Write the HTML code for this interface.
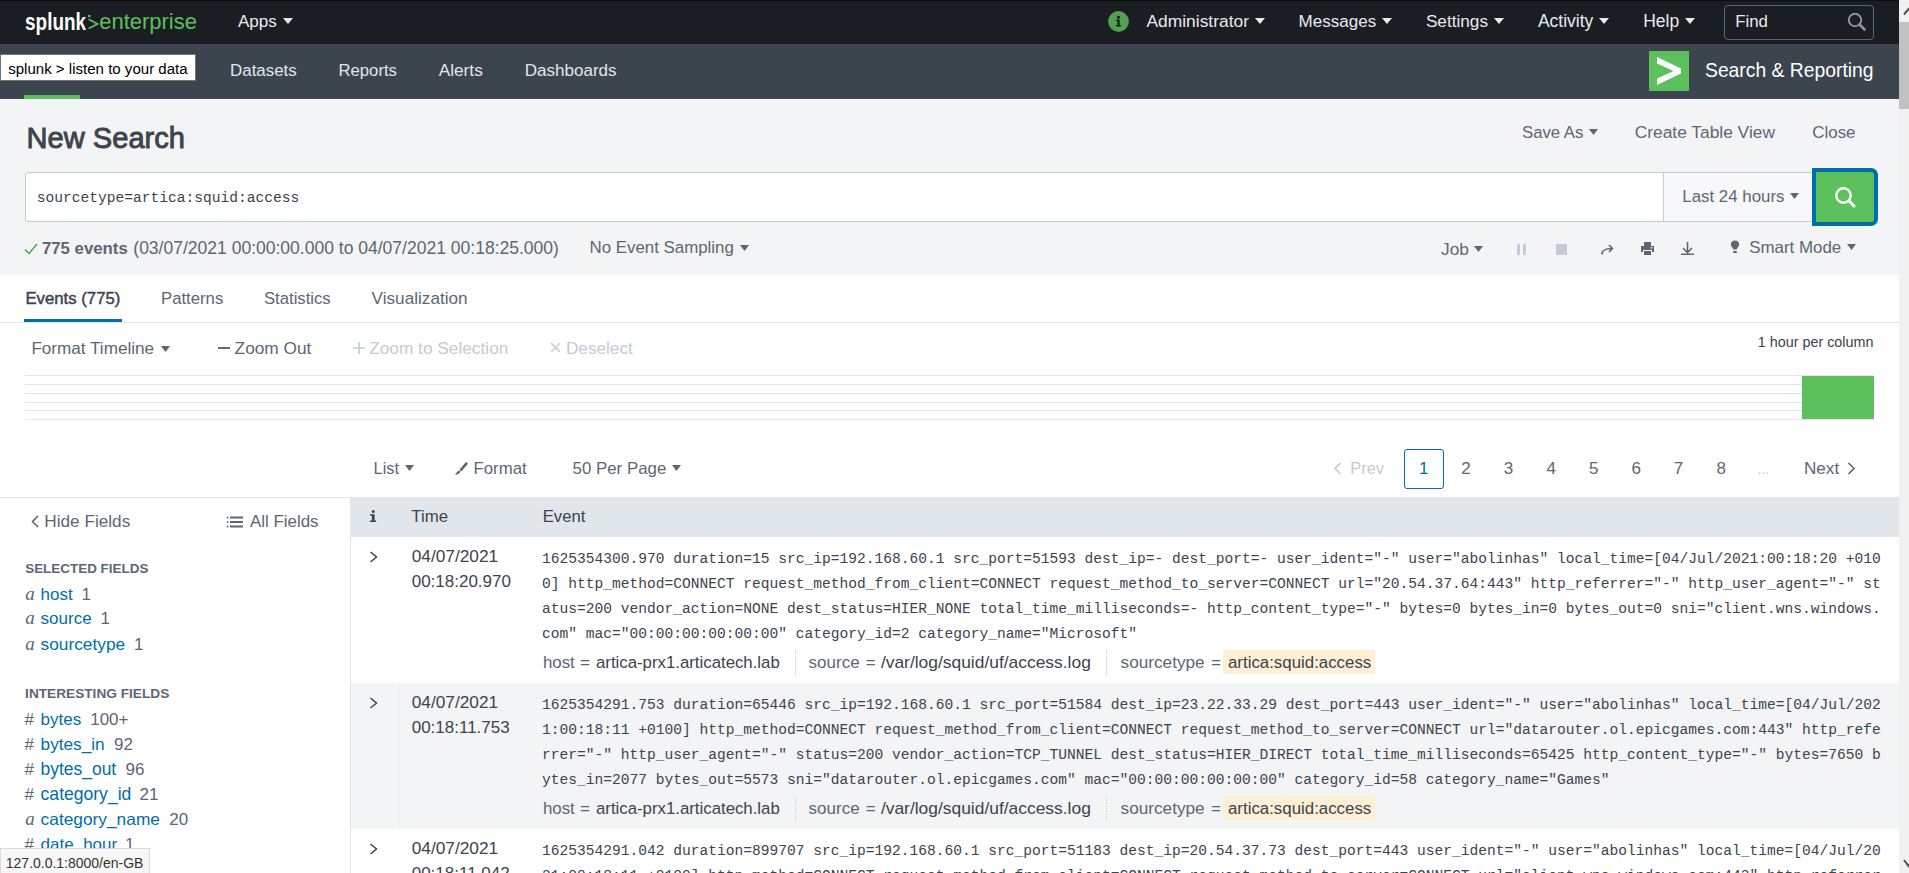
<!DOCTYPE html>
<html><head><meta charset="utf-8"><style>
html,body{margin:0;padding:0;width:1909px;height:873px;overflow:hidden;background:#fff}
body{position:relative;font-family:"Liberation Sans",sans-serif}
.t{position:absolute;white-space:pre;line-height:1;}
.r{position:absolute;display:block}
</style></head><body>
<div class="r" style="left:0px;top:0px;width:1909px;height:44px;background:#1a1d21;"></div>
<div class="r" style="left:0px;top:0px;width:1899px;height:1px;background:#0b0c0d;"></div>
<div class="r" style="left:0px;top:43px;width:1899px;height:1px;background:#16191c;"></div>
<div class="r" style="left:0px;top:44px;width:1899px;height:55px;background:#3c444d;"></div>
<div class="r" style="left:0px;top:99px;width:1899px;height:176px;background:#f2f4f5;"></div>
<div class="r" style="left:0px;top:275px;width:1899px;height:598px;background:#ffffff;"></div>
<div class="t" style="left:25px;top:11px;font-size:23.5px;line-height:23.5px;font-weight:bold;color:#fff;transform-origin:0 0;transform:scaleX(0.807);letter-spacing:0">splunk</div>
<svg class="r" style="left:87px;top:14px" width="13" height="17" viewBox="0 0 13 17"><rect x="1" y="1" width="2.6" height="2.2" fill="#5cc05c"/><path d="M1.6 5.2L10.6 9.9L1.6 14.6" fill="none" stroke="#5cc05c" stroke-width="1.7"/></svg>
<div class="t" style="left:99.20px;top:11.00px;font-size:21.99px;color:#5cc05c;font-family:'Liberation Sans',sans-serif;">enterprise</div>
<div class="t" style="left:237.90px;top:13.00px;font-size:17.07px;color:#e8ebee;font-family:'Liberation Sans',sans-serif;">Apps</div>
<svg class="r" style="left:283px;top:18px" width="10" height="6" viewBox="0 0 10 6"><path d="M0 0H10L5.0 6Z" fill="#e8ebee"/></svg>
<svg class="r" style="left:1108px;top:11px" width="21" height="21" viewBox="0 0 21 21"><circle cx="10.5" cy="10.5" r="10.4" fill="#53a051"/><circle cx="10.5" cy="6.2" r="1.5" fill="#1a1c20"/><path d="M8 8.6H11.6V14H13V15.4H8V14H9.4V10H8Z" fill="#1a1c20"/></svg>
<div class="t" style="left:1146.50px;top:13.00px;font-size:17.40px;color:#e8ebee;font-family:'Liberation Sans',sans-serif;">Administrator</div>
<svg class="r" style="left:1255px;top:18px" width="10" height="6" viewBox="0 0 10 6"><path d="M0 0H10L5.0 6Z" fill="#e8ebee"/></svg>
<div class="t" style="left:1298.60px;top:13.00px;font-size:17.03px;color:#e8ebee;font-family:'Liberation Sans',sans-serif;">Messages</div>
<svg class="r" style="left:1382px;top:18px" width="10" height="6" viewBox="0 0 10 6"><path d="M0 0H10L5.0 6Z" fill="#e8ebee"/></svg>
<div class="t" style="left:1425.90px;top:13.00px;font-size:17.19px;color:#e8ebee;font-family:'Liberation Sans',sans-serif;">Settings</div>
<svg class="r" style="left:1494px;top:18px" width="10" height="6" viewBox="0 0 10 6"><path d="M0 0H10L5.0 6Z" fill="#e8ebee"/></svg>
<div class="t" style="left:1537.90px;top:13.00px;font-size:17.49px;color:#e8ebee;font-family:'Liberation Sans',sans-serif;">Activity</div>
<svg class="r" style="left:1599px;top:18px" width="10" height="6" viewBox="0 0 10 6"><path d="M0 0H10L5.0 6Z" fill="#e8ebee"/></svg>
<div class="t" style="left:1643.20px;top:13.00px;font-size:17.50px;color:#e8ebee;font-family:'Liberation Sans',sans-serif;">Help</div>
<svg class="r" style="left:1685px;top:18px" width="10" height="6" viewBox="0 0 10 6"><path d="M0 0H10L5.0 6Z" fill="#e8ebee"/></svg>
<div class="r" style="left:1724px;top:5px;width:150px;height:35px;border:1px solid #5c6773;border-radius:4px;box-sizing:border-box;"></div>
<div class="t" style="left:1735.20px;top:14.00px;font-size:16.86px;color:#e8ebee;font-family:'Liberation Sans',sans-serif;">Find</div>
<svg class="r" style="left:1846px;top:11px" width="22" height="20" viewBox="0 0 22 20"><circle cx="9" cy="9" r="6.2" fill="none" stroke="#8b959e" stroke-width="2"/><path d="M13.5 13.5L18.5 18.5" stroke="#8b959e" stroke-width="2.6" stroke-linecap="round"/></svg>
<div class="r" style="left:0;top:54px;width:194px;height:25px;background:#fff;border:1px solid #767676;"></div>
<div class="t" style="left:8.20px;top:61.00px;font-size:15.05px;color:#000;font-family:'Liberation Sans',sans-serif;">splunk &gt; listen to your data</div>
<div class="r" style="left:24px;top:95px;width:56px;height:4px;background:#5cc05c;"></div>
<div class="t" style="left:230.00px;top:63.00px;font-size:16.93px;color:#e1e6eb;font-family:'Liberation Sans',sans-serif;">Datasets</div>
<div class="t" style="left:338.50px;top:63.00px;font-size:16.71px;color:#e1e6eb;font-family:'Liberation Sans',sans-serif;">Reports</div>
<div class="t" style="left:438.70px;top:62.00px;font-size:17.25px;color:#e1e6eb;font-family:'Liberation Sans',sans-serif;">Alerts</div>
<div class="t" style="left:524.70px;top:62.00px;font-size:17.06px;color:#e1e6eb;font-family:'Liberation Sans',sans-serif;">Dashboards</div>
<div class="r" style="left:1649px;top:51px;width:40px;height:40px;background:#5cc05c;"></div>
<svg class="r" style="left:1649px;top:51px" width="40" height="40" viewBox="0 0 40 40"><path d="M8 6L32 17.5V22.5L8 34V27.5L24.5 20L8 12.5Z" fill="#fff"/></svg>
<div class="t" style="left:1705.00px;top:61.00px;font-size:19.32px;color:#fff;font-family:'Liberation Sans',sans-serif;">Search &amp; Reporting</div>
<div class="t" style="left:26.60px;top:124.00px;font-size:29.08px;color:#3c444d;font-family:'Liberation Sans',sans-serif;-webkit-text-stroke:0.9px #3c444d;">New Search</div>
<div class="t" style="left:1522.00px;top:125.00px;font-size:16.73px;color:#5c6773;font-family:'Liberation Sans',sans-serif;">Save As</div>
<svg class="r" style="left:1589px;top:129px" width="9" height="6" viewBox="0 0 9 6"><path d="M0 0H9L4.5 6Z" fill="#5c6773"/></svg>
<div class="t" style="left:1634.70px;top:124.00px;font-size:17.36px;color:#5c6773;font-family:'Liberation Sans',sans-serif;">Create Table View</div>
<div class="t" style="left:1812.20px;top:125.00px;font-size:16.97px;color:#5c6773;font-family:'Liberation Sans',sans-serif;">Close</div>
<div class="r" style="left:25px;top:172px;width:1660px;height:50px;background:#fff;border:1px solid #c3cbd4;border-radius:3px;box-sizing:border-box"></div>
<div class="r" style="left:1663px;top:172px;width:152px;height:50px;background:#f7f8fa;border:1px solid #c3cbd4;border-right:0;box-sizing:border-box"></div>
<div class="t" style="left:36.70px;top:191.00px;font-size:14.58px;color:#3c444d;font-family:'Liberation Mono',monospace;">sourcetype=artica:squid:access</div>
<div class="t" style="left:1682.30px;top:189.00px;font-size:16.86px;color:#5c6773;font-family:'Liberation Sans',sans-serif;">Last 24 hours</div>
<svg class="r" style="left:1790px;top:193px" width="9" height="6" viewBox="0 0 9 6"><path d="M0 0H9L4.5 6Z" fill="#5c6773"/></svg>
<div class="r" style="left:1812px;top:168px;width:66px;height:58px;background:#5cc05c;border:4px solid #006eaa;border-radius:0 7px 7px 0;box-sizing:border-box"></div>
<svg class="r" style="left:1832px;top:184px" width="26" height="26" viewBox="0 0 26 26"><circle cx="11.5" cy="11.5" r="7.2" fill="none" stroke="#fff" stroke-width="2.4"/><path d="M16.8 16.8L22 22" stroke="#fff" stroke-width="3" stroke-linecap="round"/></svg>
<svg class="r" style="left:24px;top:243px" width="14" height="12" viewBox="0 0 14 12"><path d="M1 6.5L5 10.5L13 1" fill="none" stroke="#4aa64a" stroke-width="1.4"/></svg>
<div class="t" style="left:41.90px;top:241.00px;font-size:16.79px;color:#5c6773;font-family:'Liberation Sans',sans-serif;font-weight:bold;">775 events</div>
<div class="t" style="left:133.30px;top:240.00px;font-size:17.53px;color:#5c6773;font-family:'Liberation Sans',sans-serif;">(03/07/2021 00:00:00.000 to 04/07/2021 00:18:25.000)</div>
<div class="t" style="left:589.50px;top:240.00px;font-size:16.88px;color:#5c6773;font-family:'Liberation Sans',sans-serif;">No Event Sampling</div>
<svg class="r" style="left:740px;top:245px" width="9" height="6" viewBox="0 0 9 6"><path d="M0 0H9L4.5 6Z" fill="#5c6773"/></svg>
<div class="t" style="left:1441.00px;top:241.00px;font-size:17.31px;color:#5c6773;font-family:'Liberation Sans',sans-serif;">Job</div>
<svg class="r" style="left:1474px;top:246px" width="9" height="6" viewBox="0 0 9 6"><path d="M0 0H9L4.5 6Z" fill="#5c6773"/></svg>
<div class="r" style="left:1517px;top:243.5px;width:3px;height:11px;background:#c3cbd4;"></div>
<div class="r" style="left:1523px;top:243.5px;width:3px;height:11px;background:#c3cbd4;"></div>
<div class="r" style="left:1556px;top:243.5px;width:11px;height:11px;background:#c3cbd4;"></div>
<svg class="r" style="left:1601px;top:244px" width="13" height="11" viewBox="0 0 13 11"><path d="M1 10.5C1 6 4 4.5 11 4.5M8 1L11.5 4.5L8 8" fill="none" stroke="#5c6773" stroke-width="1.6"/></svg>
<svg class="r" style="left:1641px;top:242px" width="13" height="13" viewBox="0 0 13 13"><path d="M3 0H10V4H3Z M0 4H13V10H11V8H2V10H0Z M3 9H10V13H3Z" fill="#5c6773"/><rect x="9.5" y="5.2" width="2" height="1.2" fill="#fff"/></svg>
<svg class="r" style="left:1681px;top:242px" width="13" height="13" viewBox="0 0 13 13"><path d="M6.5 0V10M2 6L6.5 10.5L11 6M0 12.2H13" fill="none" stroke="#5c6773" stroke-width="1.6"/></svg>
<svg class="r" style="left:1730px;top:240px" width="10" height="14" viewBox="0 0 10 14"><path d="M5 0.5C2.5 0.5 0.8 2.3 0.8 4.5C0.8 6.5 2.8 7.5 3.5 9.5H6.5C7.2 7.5 9.2 6.5 9.2 4.5C9.2 2.3 7.5 0.5 5 0.5Z M3.2 11H6.8V13H3.2Z" fill="#5c6773"/></svg>
<div class="t" style="left:1749.20px;top:240.00px;font-size:16.91px;color:#5c6773;font-family:'Liberation Sans',sans-serif;">Smart Mode</div>
<svg class="r" style="left:1847px;top:244px" width="9" height="6" viewBox="0 0 9 6"><path d="M0 0H9L4.5 6Z" fill="#5c6773"/></svg>
<div class="t" style="left:25.40px;top:291.00px;font-size:16.76px;color:#3c444d;font-family:'Liberation Sans',sans-serif;-webkit-text-stroke:0.45px #3c444d;">Events (775)</div>
<div class="t" style="left:161.00px;top:291.00px;font-size:16.73px;color:#5c6773;font-family:'Liberation Sans',sans-serif;">Patterns</div>
<div class="t" style="left:264.00px;top:291.00px;font-size:16.67px;color:#5c6773;font-family:'Liberation Sans',sans-serif;">Statistics</div>
<div class="t" style="left:371.60px;top:290.00px;font-size:17.17px;color:#5c6773;font-family:'Liberation Sans',sans-serif;">Visualization</div>
<div class="r" style="left:0px;top:322px;width:1899px;height:1px;background:#e1e6eb;"></div>
<div class="r" style="left:24px;top:319px;width:98px;height:3px;background:#006eaa;"></div>
<div class="t" style="left:31.40px;top:340.00px;font-size:17.12px;color:#5c6773;font-family:'Liberation Sans',sans-serif;">Format Timeline</div>
<svg class="r" style="left:161px;top:346px" width="9" height="6" viewBox="0 0 9 6"><path d="M0 0H9L4.5 6Z" fill="#5c6773"/></svg>
<div class="r" style="left:218px;top:347px;width:12px;height:2px;background:#5c6773;"></div>
<div class="t" style="left:234.60px;top:340.00px;font-size:17.25px;color:#5c6773;font-family:'Liberation Sans',sans-serif;">Zoom Out</div>
<svg class="r" style="left:353px;top:342px" width="12" height="12" viewBox="0 0 12 12"><path d="M6 0V12M0 6H12" stroke="#c3cbd4" stroke-width="1.6"/></svg>
<div class="t" style="left:369.20px;top:340.00px;font-size:17.27px;color:#c3cbd4;font-family:'Liberation Sans',sans-serif;">Zoom to Selection</div>
<svg class="r" style="left:550px;top:342px" width="11" height="11" viewBox="0 0 11 11"><path d="M1 1L10 10M10 1L1 10" stroke="#c3cbd4" stroke-width="1.5"/></svg>
<div class="t" style="left:565.90px;top:340.00px;font-size:17.22px;color:#c3cbd4;font-family:'Liberation Sans',sans-serif;">Deselect</div>
<div class="t" style="left:1757.80px;top:335.00px;font-size:14.35px;color:#3c444d;font-family:'Liberation Sans',sans-serif;">1 hour per column</div>
<div class="r" style="left:25px;top:375px;width:1849px;height:1px;background:#e4e4e4;"></div>
<div class="r" style="left:25px;top:384px;width:1849px;height:1px;background:#e4e4e4;"></div>
<div class="r" style="left:25px;top:393px;width:1849px;height:1px;background:#e4e4e4;"></div>
<div class="r" style="left:25px;top:402px;width:1849px;height:1px;background:#e4e4e4;"></div>
<div class="r" style="left:25px;top:410px;width:1849px;height:1px;background:#e4e4e4;"></div>
<div class="r" style="left:25px;top:419px;width:1849px;height:1px;background:#e4e4e4;"></div>
<div class="r" style="left:1801.6px;top:376px;width:72.3px;height:43px;background:#5cc05c;"></div>
<div class="t" style="left:373.60px;top:460.00px;font-size:16.32px;color:#5c6773;font-family:'Liberation Sans',sans-serif;">List</div>
<svg class="r" style="left:405px;top:465px" width="9" height="6" viewBox="0 0 9 6"><path d="M0 0H9L4.5 6Z" fill="#5c6773"/></svg>
<svg class="r" style="left:454px;top:462px" width="14" height="14" viewBox="0 0 14 14"><path d="M12.3 1.6L7.2 7.6" stroke="#5c6773" stroke-width="2.6" stroke-linecap="round"/><path d="M5.6 8.6C3.6 8.9 2.6 10.2 1.2 12.8C3.6 12.6 5.4 12 6.6 9.8Z" fill="#5c6773"/></svg>
<div class="t" style="left:473.50px;top:461.00px;font-size:16.80px;color:#5c6773;font-family:'Liberation Sans',sans-serif;">Format</div>
<div class="t" style="left:572.50px;top:461.00px;font-size:16.89px;color:#5c6773;font-family:'Liberation Sans',sans-serif;">50 Per Page</div>
<svg class="r" style="left:672px;top:465px" width="9" height="6" viewBox="0 0 9 6"><path d="M0 0H9L4.5 6Z" fill="#5c6773"/></svg>
<svg class="r" style="left:1333px;top:462px" width="9" height="13" viewBox="0 0 9 13"><path d="M7.5 1L2 6.5L7.5 12" fill="none" stroke="#c3cbd4" stroke-width="1.6"/></svg>
<div class="t" style="left:1350.20px;top:460.00px;font-size:16.44px;color:#c3cbd4;font-family:'Liberation Sans',sans-serif;">Prev</div>
<div class="r" style="left:1404px;top:449px;width:40px;height:40px;border:1.5px solid #006eaa;border-radius:3px;box-sizing:border-box"></div>
<div class="t" style="left:1419.07px;top:460.00px;font-size:17.00px;color:#006eaa;font-family:'Liberation Sans',sans-serif;">1</div>
<div class="t" style="left:1461.27px;top:460.00px;font-size:17.00px;color:#5c6773;font-family:'Liberation Sans',sans-serif;">2</div>
<div class="t" style="left:1503.87px;top:460.00px;font-size:17.00px;color:#5c6773;font-family:'Liberation Sans',sans-serif;">3</div>
<div class="t" style="left:1546.47px;top:460.00px;font-size:17.00px;color:#5c6773;font-family:'Liberation Sans',sans-serif;">4</div>
<div class="t" style="left:1588.97px;top:460.00px;font-size:17.00px;color:#5c6773;font-family:'Liberation Sans',sans-serif;">5</div>
<div class="t" style="left:1631.47px;top:460.00px;font-size:17.00px;color:#5c6773;font-family:'Liberation Sans',sans-serif;">6</div>
<div class="t" style="left:1673.77px;top:460.00px;font-size:17.00px;color:#5c6773;font-family:'Liberation Sans',sans-serif;">7</div>
<div class="t" style="left:1716.57px;top:460.00px;font-size:17.00px;color:#5c6773;font-family:'Liberation Sans',sans-serif;">8</div>
<div class="t" style="left:1757.50px;top:462.00px;font-size:14.00px;color:#c3cbd4;font-family:'Liberation Sans',sans-serif;">...</div>
<div class="t" style="left:1804.00px;top:460.00px;font-size:17.12px;color:#5c6773;font-family:'Liberation Sans',sans-serif;">Next</div>
<svg class="r" style="left:1847px;top:462px" width="9" height="13" viewBox="0 0 9 13"><path d="M1.5 1L7 6.5L1.5 12" fill="none" stroke="#5c6773" stroke-width="1.6"/></svg>
<div class="r" style="left:0px;top:497px;width:351px;height:1px;background:#e1e6eb;"></div>
<div class="r" style="left:350px;top:497px;width:1px;height:376px;background:#e1e6eb;"></div>
<svg class="r" style="left:31px;top:515px" width="8" height="13" viewBox="0 0 8 13"><path d="M7 1L1.5 6.5L7 12" fill="none" stroke="#5c6773" stroke-width="1.6"/></svg>
<div class="t" style="left:44.30px;top:513.00px;font-size:17.19px;color:#5c6773;font-family:'Liberation Sans',sans-serif;">Hide Fields</div>
<svg class="r" style="left:226px;top:516px" width="17" height="12" viewBox="0 0 17 12"><rect x="0.8" y="0.8" width="1.6" height="1.6" fill="#5c6773"/><rect x="0.8" y="5.3" width="1.6" height="1.6" fill="#5c6773"/><rect x="0.8" y="9.8" width="1.6" height="1.6" fill="#5c6773"/><rect x="4" y="0.5" width="13" height="2" fill="#5c6773"/><rect x="4" y="5" width="13" height="2" fill="#5c6773"/><rect x="4" y="9.5" width="13" height="2" fill="#5c6773"/></svg>
<div class="t" style="left:249.90px;top:514.00px;font-size:16.93px;color:#5c6773;font-family:'Liberation Sans',sans-serif;">All Fields</div>
<div class="t" style="left:25.20px;top:562.00px;font-size:13.45px;color:#5c6773;font-family:'Liberation Sans',sans-serif;font-weight:bold;">SELECTED FIELDS</div>
<div class="t" style="left:25.20px;top:584.00px;font-size:19.00px;color:#5c6773;font-family:'Liberation Serif',serif;font-style:italic;">a</div>
<div class="t" style="left:40.60px;top:587.00px;font-size:16.93px;color:#006eaa;font-family:'Liberation Sans',sans-serif;">host</div>
<div class="t" style="left:81.40px;top:586.00px;font-size:17.00px;color:#5c6773;font-family:'Liberation Sans',sans-serif;">1</div>
<div class="t" style="left:25.20px;top:608.00px;font-size:19.00px;color:#5c6773;font-family:'Liberation Serif',serif;font-style:italic;">a</div>
<div class="t" style="left:40.60px;top:610.00px;font-size:17.06px;color:#006eaa;font-family:'Liberation Sans',sans-serif;">source</div>
<div class="t" style="left:100.60px;top:610.00px;font-size:17.00px;color:#5c6773;font-family:'Liberation Sans',sans-serif;">1</div>
<div class="t" style="left:25.20px;top:634.00px;font-size:19.00px;color:#5c6773;font-family:'Liberation Serif',serif;font-style:italic;">a</div>
<div class="t" style="left:40.60px;top:636.00px;font-size:17.29px;color:#006eaa;font-family:'Liberation Sans',sans-serif;">sourcetype</div>
<div class="t" style="left:134.00px;top:636.00px;font-size:17.00px;color:#5c6773;font-family:'Liberation Sans',sans-serif;">1</div>
<div class="t" style="left:25.10px;top:687.00px;font-size:13.66px;color:#5c6773;font-family:'Liberation Sans',sans-serif;font-weight:bold;">INTERESTING FIELDS</div>
<div class="t" style="left:24.40px;top:711.00px;font-size:17.00px;color:#5c6773;font-family:'Liberation Sans',sans-serif;">#</div>
<div class="t" style="left:40.60px;top:711.00px;font-size:17.07px;color:#006eaa;font-family:'Liberation Sans',sans-serif;">bytes</div>
<div class="t" style="left:90.20px;top:711.00px;font-size:17.00px;color:#5c6773;font-family:'Liberation Sans',sans-serif;">100+</div>
<div class="t" style="left:24.40px;top:736.00px;font-size:17.00px;color:#5c6773;font-family:'Liberation Sans',sans-serif;">#</div>
<div class="t" style="left:40.60px;top:736.00px;font-size:17.21px;color:#006eaa;font-family:'Liberation Sans',sans-serif;">bytes_in</div>
<div class="t" style="left:114.00px;top:736.00px;font-size:17.00px;color:#5c6773;font-family:'Liberation Sans',sans-serif;">92</div>
<div class="t" style="left:24.40px;top:761.00px;font-size:17.00px;color:#5c6773;font-family:'Liberation Sans',sans-serif;">#</div>
<div class="t" style="left:40.60px;top:761.00px;font-size:17.46px;color:#006eaa;font-family:'Liberation Sans',sans-serif;">bytes_out</div>
<div class="t" style="left:125.60px;top:761.00px;font-size:17.00px;color:#5c6773;font-family:'Liberation Sans',sans-serif;">96</div>
<div class="t" style="left:24.40px;top:786.00px;font-size:17.00px;color:#5c6773;font-family:'Liberation Sans',sans-serif;">#</div>
<div class="t" style="left:40.60px;top:786.00px;font-size:17.56px;color:#006eaa;font-family:'Liberation Sans',sans-serif;">category_id</div>
<div class="t" style="left:139.50px;top:786.00px;font-size:17.00px;color:#5c6773;font-family:'Liberation Sans',sans-serif;">21</div>
<div class="t" style="left:25.20px;top:809.00px;font-size:19.00px;color:#5c6773;font-family:'Liberation Serif',serif;font-style:italic;">a</div>
<div class="t" style="left:40.60px;top:811.00px;font-size:17.32px;color:#006eaa;font-family:'Liberation Sans',sans-serif;">category_name</div>
<div class="t" style="left:169.30px;top:811.00px;font-size:17.00px;color:#5c6773;font-family:'Liberation Sans',sans-serif;">20</div>
<div class="t" style="left:24.40px;top:836.00px;font-size:17.00px;color:#5c6773;font-family:'Liberation Sans',sans-serif;">#</div>
<div class="t" style="left:40.60px;top:836.00px;font-size:17.00px;color:#006eaa;font-family:'Liberation Sans',sans-serif;">date_hour</div>
<div class="t" style="left:125.00px;top:836.00px;font-size:17.00px;color:#5c6773;font-family:'Liberation Sans',sans-serif;">1</div>
<div class="r" style="left:351px;top:497px;width:1548px;height:40px;background:#e1e6eb;"></div>
<svg class="r" style="left:369px;top:509px" width="8" height="14" viewBox="0 0 8 14"><circle cx="4.2" cy="2.5" r="1.5" fill="#3c444d"/><path d="M1 5.2H5.6V11.6H7.1V13.1H0.9V11.6H2.9V6.7H1Z" fill="#3c444d"/></svg>
<div class="t" style="left:411.30px;top:509.00px;font-size:16.80px;color:#3c444d;font-family:'Liberation Sans',sans-serif;">Time</div>
<div class="t" style="left:542.70px;top:509.00px;font-size:16.66px;color:#3c444d;font-family:'Liberation Sans',sans-serif;">Event</div>
<div class="r" style="left:351px;top:683px;width:1548px;height:146px;background:#f2f4f5;"></div>
<div class="r" style="left:395px;top:683px;width:1px;height:146px;background:#ffffff;"></div>
<svg class="r" style="left:369px;top:551.0px" width="10" height="12" viewBox="0 0 10 12"><path d="M1.5 1L7.5 6L1.5 11" fill="none" stroke="#3c444d" stroke-width="1.5"/></svg>
<div class="t" style="left:411.70px;top:548.00px;font-size:17.30px;color:#3c444d;font-family:'Liberation Sans',sans-serif;">04/07/2021</div>
<div class="t" style="left:411.70px;top:573.00px;font-size:17.00px;color:#3c444d;font-family:'Liberation Sans',sans-serif;">00:18:20.970</div>
<div class="t" style="left:542px;top:552.00px;font-size:14.58px;font-family:'Liberation Mono',monospace;color:#3c444d;letter-spacing:0.002px">1625354300.970 duration=15 src_ip=192.168.60.1 src_port=51593 dest_ip=- dest_port=- user_ident=&quot;-&quot; user=&quot;abolinhas&quot; local_time=[04/Jul/2021:00:18:20 +010</div>
<div class="t" style="left:542px;top:577.00px;font-size:14.58px;font-family:'Liberation Mono',monospace;color:#3c444d;letter-spacing:0.002px">0] http_method=CONNECT request_method_from_client=CONNECT request_method_to_server=CONNECT url=&quot;20.54.37.64:443&quot; http_referrer=&quot;-&quot; http_user_agent=&quot;-&quot; st</div>
<div class="t" style="left:542px;top:602.00px;font-size:14.58px;font-family:'Liberation Mono',monospace;color:#3c444d;letter-spacing:0.002px">atus=200 vendor_action=NONE dest_status=HIER_NONE total_time_milliseconds=- http_content_type=&quot;-&quot; bytes=0 bytes_in=0 bytes_out=0 sni=&quot;client.wns.windows.</div>
<div class="t" style="left:542px;top:627.00px;font-size:14.58px;font-family:'Liberation Mono',monospace;color:#3c444d;letter-spacing:0.002px">com&quot; mac=&quot;00:00:00:00:00:00&quot; category_id=2 category_name=&quot;Microsoft&quot;</div>
<div class="t" style="left:542.90px;top:655.00px;font-size:16.88px;color:#5c6773;font-family:'Liberation Sans',sans-serif;">host</div>
<div class="t" style="left:580.00px;top:654.00px;font-size:17.00px;color:#5c6773;font-family:'Liberation Sans',sans-serif;">=</div>
<div class="t" style="left:596.00px;top:655.00px;font-size:16.80px;color:#3c444d;font-family:'Liberation Sans',sans-serif;">artica-prx1.articatech.lab</div>
<div class="r" style="left:795px;top:650.0px;width:0;height:25px;border-left:1px dotted #c3cbd4"></div>
<div class="t" style="left:808.60px;top:654.00px;font-size:17.03px;color:#5c6773;font-family:'Liberation Sans',sans-serif;">source</div>
<div class="t" style="left:865.70px;top:654.00px;font-size:17.00px;color:#5c6773;font-family:'Liberation Sans',sans-serif;">=</div>
<div class="t" style="left:880.90px;top:654.00px;font-size:17.42px;color:#3c444d;font-family:'Liberation Sans',sans-serif;">/var/log/squid/uf/access.log</div>
<div class="r" style="left:1106px;top:650.0px;width:0;height:25px;border-left:1px dotted #c3cbd4"></div>
<div class="t" style="left:1120.60px;top:654.00px;font-size:17.19px;color:#5c6773;font-family:'Liberation Sans',sans-serif;">sourcetype</div>
<div class="t" style="left:1211.00px;top:654.00px;font-size:17.00px;color:#5c6773;font-family:'Liberation Sans',sans-serif;">=</div>
<div class="r" style="left:1223px;top:650.2px;width:152px;height:24.3px;background:#fdf0d5;"></div>
<div class="t" style="left:1228.00px;top:655.00px;font-size:16.85px;color:#3c444d;font-family:'Liberation Sans',sans-serif;">artica:squid:access</div>
<svg class="r" style="left:369px;top:697.0px" width="10" height="12" viewBox="0 0 10 12"><path d="M1.5 1L7.5 6L1.5 11" fill="none" stroke="#3c444d" stroke-width="1.5"/></svg>
<div class="t" style="left:411.70px;top:694.00px;font-size:17.30px;color:#3c444d;font-family:'Liberation Sans',sans-serif;">04/07/2021</div>
<div class="t" style="left:411.70px;top:719.00px;font-size:17.00px;color:#3c444d;font-family:'Liberation Sans',sans-serif;">00:18:11.753</div>
<div class="t" style="left:542px;top:698.00px;font-size:14.58px;font-family:'Liberation Mono',monospace;color:#3c444d;letter-spacing:0.002px">1625354291.753 duration=65446 src_ip=192.168.60.1 src_port=51584 dest_ip=23.22.33.29 dest_port=443 user_ident=&quot;-&quot; user=&quot;abolinhas&quot; local_time=[04/Jul/202</div>
<div class="t" style="left:542px;top:723.00px;font-size:14.58px;font-family:'Liberation Mono',monospace;color:#3c444d;letter-spacing:0.002px">1:00:18:11 +0100] http_method=CONNECT request_method_from_client=CONNECT request_method_to_server=CONNECT url=&quot;datarouter.ol.epicgames.com:443&quot; http_refe</div>
<div class="t" style="left:542px;top:748.00px;font-size:14.58px;font-family:'Liberation Mono',monospace;color:#3c444d;letter-spacing:0.002px">rrer=&quot;-&quot; http_user_agent=&quot;-&quot; status=200 vendor_action=TCP_TUNNEL dest_status=HIER_DIRECT total_time_milliseconds=65425 http_content_type=&quot;-&quot; bytes=7650 b</div>
<div class="t" style="left:542px;top:773.00px;font-size:14.58px;font-family:'Liberation Mono',monospace;color:#3c444d;letter-spacing:0.002px">ytes_in=2077 bytes_out=5573 sni=&quot;datarouter.ol.epicgames.com&quot; mac=&quot;00:00:00:00:00:00&quot; category_id=58 category_name=&quot;Games&quot;</div>
<div class="t" style="left:542.90px;top:801.00px;font-size:16.88px;color:#5c6773;font-family:'Liberation Sans',sans-serif;">host</div>
<div class="t" style="left:580.00px;top:800.00px;font-size:17.00px;color:#5c6773;font-family:'Liberation Sans',sans-serif;">=</div>
<div class="t" style="left:596.00px;top:801.00px;font-size:16.80px;color:#3c444d;font-family:'Liberation Sans',sans-serif;">artica-prx1.articatech.lab</div>
<div class="r" style="left:795px;top:796.0px;width:0;height:25px;border-left:1px dotted #c3cbd4"></div>
<div class="t" style="left:808.60px;top:800.00px;font-size:17.03px;color:#5c6773;font-family:'Liberation Sans',sans-serif;">source</div>
<div class="t" style="left:865.70px;top:800.00px;font-size:17.00px;color:#5c6773;font-family:'Liberation Sans',sans-serif;">=</div>
<div class="t" style="left:880.90px;top:800.00px;font-size:17.42px;color:#3c444d;font-family:'Liberation Sans',sans-serif;">/var/log/squid/uf/access.log</div>
<div class="r" style="left:1106px;top:796.0px;width:0;height:25px;border-left:1px dotted #c3cbd4"></div>
<div class="t" style="left:1120.60px;top:800.00px;font-size:17.19px;color:#5c6773;font-family:'Liberation Sans',sans-serif;">sourcetype</div>
<div class="t" style="left:1211.00px;top:800.00px;font-size:17.00px;color:#5c6773;font-family:'Liberation Sans',sans-serif;">=</div>
<div class="r" style="left:1223px;top:796.2px;width:152px;height:24.3px;background:#fdf0d5;"></div>
<div class="t" style="left:1228.00px;top:801.00px;font-size:16.85px;color:#3c444d;font-family:'Liberation Sans',sans-serif;">artica:squid:access</div>
<svg class="r" style="left:369px;top:843.0px" width="10" height="12" viewBox="0 0 10 12"><path d="M1.5 1L7.5 6L1.5 11" fill="none" stroke="#3c444d" stroke-width="1.5"/></svg>
<div class="t" style="left:411.70px;top:840.00px;font-size:17.30px;color:#3c444d;font-family:'Liberation Sans',sans-serif;">04/07/2021</div>
<div class="t" style="left:411.70px;top:865.00px;font-size:17.00px;color:#3c444d;font-family:'Liberation Sans',sans-serif;">00:18:11.042</div>
<div class="t" style="left:542px;top:844.00px;font-size:14.58px;font-family:'Liberation Mono',monospace;color:#3c444d;letter-spacing:0.002px">1625354291.042 duration=899707 src_ip=192.168.60.1 src_port=51183 dest_ip=20.54.37.73 dest_port=443 user_ident=&quot;-&quot; user=&quot;abolinhas&quot; local_time=[04/Jul/20</div>
<div class="t" style="left:542px;top:869.00px;font-size:14.58px;font-family:'Liberation Mono',monospace;color:#3c444d;letter-spacing:0.002px">21:00:18:11 +0100] http_method=CONNECT request_method_from_client=CONNECT request_method_to_server=CONNECT url=&quot;client.wns.windows.com:443&quot; http_referrer</div>
<div class="r" style="left:1899px;top:0px;width:10px;height:873px;background:#f1f1f1;"></div>
<div class="r" style="left:1899px;top:22px;width:10px;height:87px;background:#c1c1c1;"></div>
<svg class="r" style="left:1899px;top:0" width="10" height="20" viewBox="0 0 10 20"><path d="M5 14.5L9.5 9L14 14.5" fill="none" stroke="#505050" stroke-width="2"/></svg>
<svg class="r" style="left:1899px;top:853px" width="10" height="20" viewBox="0 0 10 20"><path d="M5 7L9.5 13L14 7" fill="none" stroke="#505050" stroke-width="2"/></svg>
<div class="r" style="left:0;top:848px;width:150px;height:26px;background:#f7f7f7;border:1px solid #dadada;box-sizing:border-box"></div>
<div class="t" style="left:5.80px;top:856.00px;font-size:13.99px;color:#333333;font-family:'Liberation Sans',sans-serif;">127.0.0.1:8000/en-GB</div>
</body></html>
